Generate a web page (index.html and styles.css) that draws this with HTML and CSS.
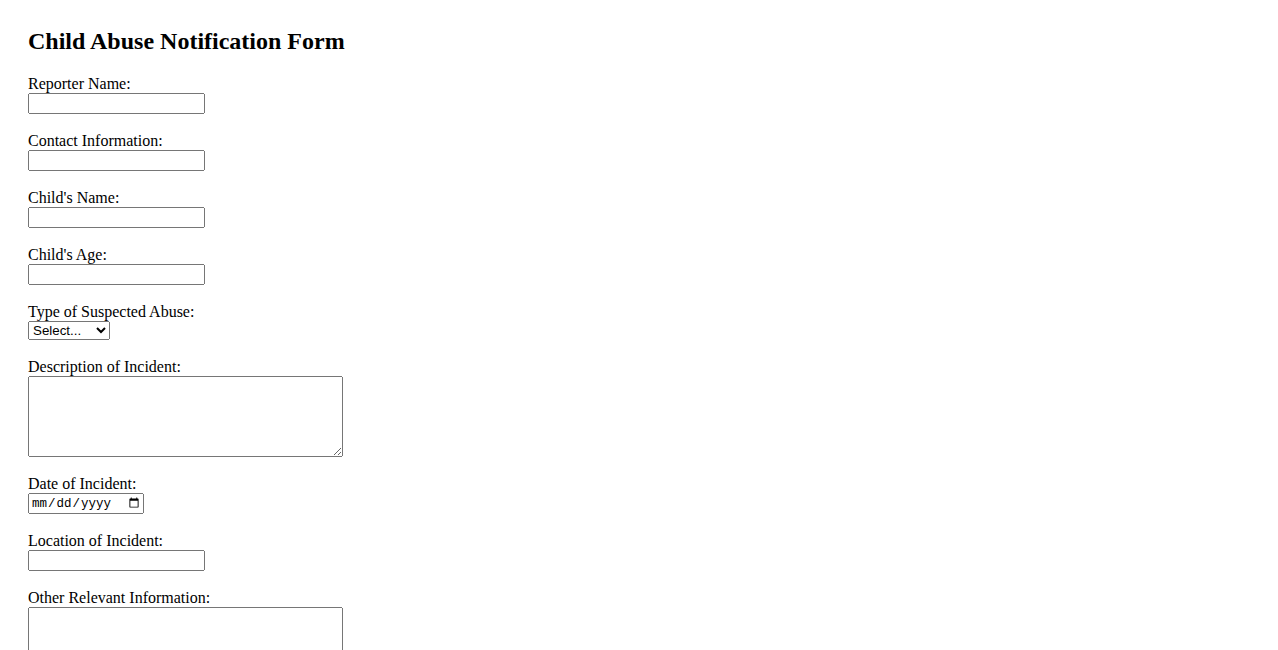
FILE: index.html
```html
<!DOCTYPE html>
<html lang="en">
<head>
<meta charset="utf-8">
<title>Child Abuse Notification Form</title>
<link rel="stylesheet" href="styles.css">
</head>
<body>
<div class="page">
  <h2 class="title">Child Abuse Notification Form</h2>
  <form class="form">
    <div class="field">
      <label class="label" for="reporter">Reporter Name:</label>
      <input class="text" type="text" id="reporter">
    </div>
    <div class="field">
      <label class="label" for="contact">Contact Information:</label>
      <input class="text" type="text" id="contact">
    </div>
    <div class="field">
      <label class="label" for="child">Child's Name:</label>
      <input class="text" type="text" id="child">
    </div>
    <div class="field">
      <label class="label" for="age">Child's Age:</label>
      <input class="text" type="text" id="age">
    </div>
    <div class="field">
      <label class="label" for="type">Type of Suspected Abuse:</label>
      <select class="select" id="type">
        <option>Select...</option>
        <option>Physical</option>
        <option>Emotional</option>
        <option>Sexual</option>
        <option>Neglect</option>
      </select>
    </div>
    <div class="field">
      <label class="label" for="desc">Description of Incident:</label>
      <textarea class="area" id="desc"></textarea>
    </div>
    <div class="field">
      <label class="label" for="date">Date of Incident:</label>
      <input class="date" type="date" id="date">
    </div>
    <div class="field">
      <label class="label" for="loc">Location of Incident:</label>
      <input class="text" type="text" id="loc">
    </div>
    <div class="field">
      <label class="label" for="other">Other Relevant Information:</label>
      <textarea class="area" id="other"></textarea>
    </div>
  </form>
</div>
</body>
</html>
```
FILE: styles.css
```css
html, body {
  margin: 0;
  padding: 0;
  background: #ffffff;
}
body {
  font-family: "Liberation Serif", "Times New Roman", serif;
  font-size: 16px;
  color: #000000;
}
.page {
  padding: 27px 28px;
}
.title {
  margin: 0 0 20px 0;
  font-size: 24px;
  line-height: 28px;
  font-weight: bold;
}
.form {
  margin: 0;
}
.field {
  margin-bottom: 18px;
}
.label {
  display: block;
  line-height: 18px;
}
.text,
.select,
.area,
.date {
  display: block;
  box-sizing: border-box;
  margin: 0;
  font-family: "Liberation Sans", Arial, sans-serif;
  font-size: 13.333px;
}
.text {
  width: 177px;
  height: 21px;
}
.select {
  width: 82px;
  height: 19px;
}
.area {
  width: 315px;
  height: 81px;
  font-family: "Liberation Mono", monospace;
}
.date {
  width: 116px;
  height: 21px;
  font-family: "Liberation Mono", "DejaVu Sans Mono", monospace;
  font-size: 12.5px;
}
```
